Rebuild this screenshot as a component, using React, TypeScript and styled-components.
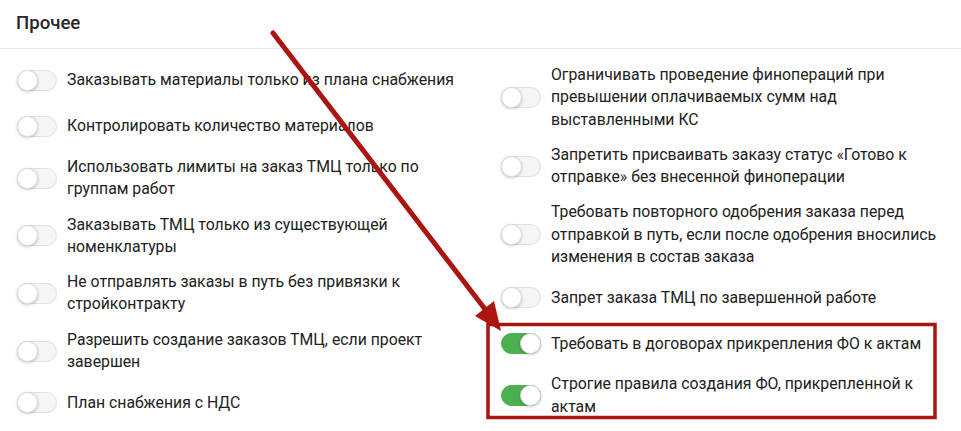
import React from 'react'
import styled, { createGlobalStyle } from 'styled-components'

const GlobalStyle = createGlobalStyle`
  html, body {
    margin: 0;
    padding: 0;
    background: #fff;
  }
  body {
    font-family: 'Roboto', 'Liberation Sans', sans-serif;
    color: #212121;
  }
`;

const Page = styled.div`
  position: relative;
  width: 961px;
  height: 431px;
  overflow: hidden;
  background: #fff;
`;

const Header = styled.div`
  height: 48px;
  padding: 0 16px;
  display: flex;
  align-items: center;
  border-bottom: 1px solid #e9e9e9;
`;

const Title = styled.h2`
  margin: 0 0 2px;
  font-size: 18.6px;
  font-weight: 500;
  color: #262626;
`;

const Columns = styled.div`
  display: grid;
  grid-template-columns: 1fr 1fr;
  column-gap: 40px;
  padding: 15px 16px 0 17px;
`;

const Column = styled.div`
  display: flex;
  flex-direction: column;
  gap: 13px;
`;

const Row = styled.label`
  display: flex;
  align-items: center;
  gap: 10px;
  min-height: 33px;
`;

const Label = styled.span`
  font-size: 15.8px;
  line-height: 22.3px;
  color: #212121;
  max-width: 398px;
`;

const Track = styled.span<{ $on: boolean }>`
  position: relative;
  flex: none;
  width: 40px;
  height: 21px;
  border-radius: 11px;
  box-sizing: border-box;
  background: ${p => (p.$on ? '#4caf50' : '#f5f5f5')};
  border: 1px solid ${p => (p.$on ? '#4caf50' : '#e0e0e0')};
`;

const Knob = styled.span<{ $on: boolean }>`
  position: absolute;
  top: -1px;
  left: ${p => (p.$on ? '18px' : '-1px')};
  width: 21px;
  height: 21px;
  border-radius: 50%;
  background: #fff;
  box-sizing: border-box;
  border: 1px solid #dadada;
  box-shadow: 0 1px 3px rgba(0, 0, 0, 0.22);
`;

const Annotation = styled.svg`
  position: absolute;
  left: 0;
  top: 0;
  pointer-events: none;
`;

const Toggle = ({ on }: { on: boolean }) => (
  <Track $on={on}>
    <Knob $on={on} />
  </Track>
);

type Item = { text: string; on?: boolean };

const left: Item[] = [
  { text: 'Заказывать материалы только из плана снабжения' },
  { text: 'Контролировать количество материалов' },
  { text: 'Использовать лимиты на заказ ТМЦ только по группам работ' },
  { text: 'Заказывать ТМЦ только из существующей номенклатуры' },
  { text: 'Не отправлять заказы в путь без привязки к стройконтракту' },
  { text: 'Разрешить создание заказов ТМЦ, если проект завершен' },
  { text: 'План снабжения с НДС' },
];

const right: Item[] = [
  { text: 'Ограничивать проведение финопераций при превышении оплачиваемых сумм над выставленными КС' },
  { text: 'Запретить присваивать заказу статус «Готово к отправке» без внесенной финоперации' },
  { text: 'Требовать повторного одобрения заказа перед отправкой в путь, если после одобрения вносились изменения в состав заказа' },
  { text: 'Запрет заказа ТМЦ по завершенной работе' },
  { text: 'Требовать в договорах прикрепления ФО к актам', on: true },
  { text: 'Строгие правила создания ФО, прикрепленной к актам', on: true },
];

const renderItems = (items: Item[]) =>
  items.map(item => (
    <Row key={item.text}>
      <Toggle on={!!item.on} />
      <Label>{item.text}</Label>
    </Row>
  ));

export default function App() {
  const red = '#ab1410';
  return (
    <Page>
      <GlobalStyle />
      <Header>
        <Title>Прочее</Title>
      </Header>
      <Columns>
        <Column>{renderItems(left)}</Column>
        <Column>{renderItems(right)}</Column>
      </Columns>
      <Annotation width={961} height={431}>
        <rect x={488} y={324.5} width={447} height={93} fill="none" stroke={red} strokeWidth={3.5} />
        <line x1={273} y1={33} x2={488} y2={313} stroke={red} strokeWidth={5} strokeLinecap="round" />
        <polygon points="501,331 475,316 494,301" fill={red} />
      </Annotation>
    </Page>
  );
}
